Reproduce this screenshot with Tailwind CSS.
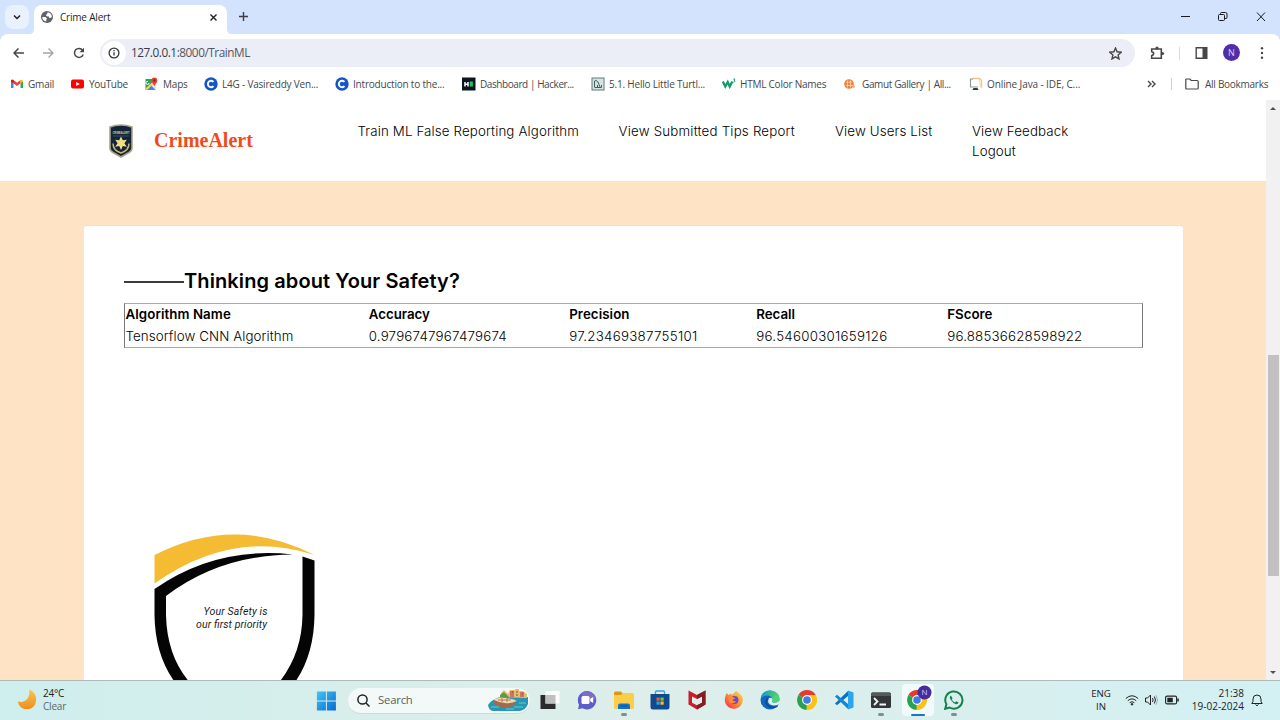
<!DOCTYPE html>
<html lang="en">
<head>
<meta charset="utf-8">
<title>Crime Alert</title>
<script src="https://cdn.jsdelivr.net/npm/@tailwindcss/browser@4"></script>
</head>
<body class="w-[1280px] h-[720px] overflow-hidden flex flex-col bg-white font-['Open_Sans','Noto_Sans',sans-serif] text-[#45474a]">

<!-- Tab strip -->
<div class="h-[34px] shrink-0 bg-[#d3e2fd] flex items-end">
  <div class="w-6 h-6 ml-[5px] mb-[5px] rounded-lg bg-[#e9f0fe] grid place-items-center">
    <svg class="w-2 h-2" viewBox="0 0 8 8" fill="none" stroke="#1f1f1f" stroke-width="1.5"><path d="M1 2.5l3 3 3-3"/></svg>
  </div>
  <svg class="w-[5px] h-[5px]" viewBox="0 0 5 5" fill="#fff"><path d="M5 0v5H0Q5 5 5 0z"/></svg>
  <div class="w-[193px] h-[29px] bg-white rounded-t-lg flex items-center pl-[7px] pb-[5px]">
    <svg class="w-3 h-3" viewBox="0 0 12 12"><circle cx="6" cy="6" r="6" fill="#5f6368"/><path d="M1.3 6h3l1.8 1.6-.8 1v2C3 10.300 1.100 8.500 1.300 6zM6.500 1.500L6 3 4.800 4.300l1.700 1.200H8L8.200 7l2-.2.7-1.400C10.700 3 8.700 1.200 6.500 1.500z" fill="#fff"/></svg>
    <span class="ml-[7px] text-[10px] tracking-[-0.200px] text-[#1f1f1f] grow">Crime Alert</span>
    <svg class="w-[7px] h-[7px] mr-[10px]" viewBox="0 0 7 7" stroke="#1f1f1f" stroke-width="1.4"><path d="M.5.5l6 6M6.500.5l-6 6"/></svg>
  </div>
  <svg class="w-[5px] h-[5px]" viewBox="0 0 5 5" fill="#fff"><path d="M0 0v5h5Q0 5 0 0z"/></svg>
  <svg class="w-[9px] h-[9px] ml-[7px] mb-[13px]" viewBox="0 0 9 9" stroke="#3c3e41" stroke-width="1.400"><path d="M4.500 0v9M0 4.500h9"/></svg>
  <div class="grow"></div>
  <svg class="w-[86px] h-[12px] mr-[13px] mb-[11px]" viewBox="0 0 86 12" fill="none" stroke="#1b1c20"><path d="M0 5.500h9"/><rect x="37.500" y="3.500" width="6" height="6" rx="1"/><path d="M39.500 3.500v-1q0-1 1-1h4q1.500 0 1.500 1.500v3.500q0 1-1 1h-1"/><path d="M76 1.500l8 8.500M84 1.500L76 10"/></svg>
</div>

<!-- Toolbar -->
<div class="h-[38px] shrink-0 bg-[#d3e2fd]">
<div class="h-full bg-white rounded-t-lg flex items-center pl-[13px]">
  <svg class="w-[11px] h-[10px]" viewBox="0 0 11 10" fill="none" stroke="#474747" stroke-width="1.500"><path d="M5.500.5L1 5l4.500 4.500M1 5h10"/></svg>
  <svg class="w-[11px] h-[10px] ml-[19px]" viewBox="0 0 11 10" fill="none" stroke="#a4a4a6" stroke-width="1.300"><path d="M5.500.5L10 5 5.500 9.500M10 5H0"/></svg>
  <svg class="w-[12px] h-[12px] ml-[19px]" viewBox="0 0 12 12"><path d="M10.200 7.500A4.500 4.500 0 1 1 9.600 3.200" fill="none" stroke="#474747" stroke-width="1.500"/><path d="M11 .8v4.500H6.500z" fill="#474747"/></svg>
  <div class="w-[1035px] h-[28px] ml-[15px] rounded-full bg-[#ebedf7] flex items-center pl-[2px]">
    <div class="w-6 h-6 rounded-full bg-white grid place-items-center">
      <svg class="w-[12px] h-[12px]" viewBox="0 0 12 12"><circle cx="6" cy="6" r="4.900" fill="none" stroke="#333538" stroke-width="1.300"/><path d="M6 5.300v3.300M6 3v1.300" stroke="#333538" stroke-width="1.300"/></svg>
    </div>
    <span class="ml-[5px] grow text-[11.800px] tracking-[-0.460px] text-[#55575c] whitespace-nowrap"><span class="text-[#3a3b3e]">127.0.0.1</span>:8000/TrainML</span>
    <svg class="w-[13px] h-[13px] mr-[13px]" viewBox="0 0 13 13" fill="none" stroke="#474747" stroke-width="1.400"><path d="M6.500 1l1.600 3.800 4.100.4-3.100 2.700.9 4-3.500-2.100L3 11.900l.9-4L.8 5.200l4.100-.4z"/></svg>
  </div>
  <svg class="w-[15px] h-[14px] ml-[15px]" viewBox="0 0 15 14"><path d="M1.700 3h9.600v9.300H1.700V9.600q2-.3 2-2t-2-2z" fill="none" stroke="#474747" stroke-width="1.600"/><circle cx="7" cy="2" r="1.600" fill="#474747"/><circle cx="12.500" cy="7.500" r="1.600" fill="#474747"/></svg>
  <div class="w-px h-[13px] ml-[14px] bg-[#c9dcfb]"></div>
  <svg class="w-[13px] h-[12px] ml-[15px]" viewBox="0 0 13 12"><path d="M1.200.7h10.600v10.600H1.200z" fill="none" stroke="#474747" stroke-width="1.400"/><path d="M7.500 1h4.500v10H7.500z" fill="#474747"/></svg>
  <div class="w-[17px] h-[17px] ml-[15px] mb-px rounded-full bg-[#512da8] text-[#dcd4f3] text-[9px] leading-[17px] text-center">N</div>
  <svg class="w-[4px] h-[12px] ml-[20px]" viewBox="0 0 4 12" fill="#474747"><circle cx="2" cy="1.300" r="1.200"/><circle cx="2" cy="6" r="1.200"/><circle cx="2" cy="10.700" r="1.200"/></svg>
</div>
</div>

<!-- Bookmarks -->
<div class="h-[28px] shrink-0 pl-[10px] pb-[4px] grid grid-cols-[61px_73px_60px_131px_127px_129px_131px_121px_126px_178px_24px_14px_84px] items-center text-[10px] tracking-[-0.200px] whitespace-nowrap">
  <div class="flex items-center gap-[4px]"><svg class="w-[14px] h-[14px]" viewBox="0 0 14 14"><path d="M1 4v7h2.500V5z" fill="#4285f4"/><path d="M10.500 5v6H13V4z" fill="#34a853"/><path d="M1 4.500V3.300Q2 2 3.500 3.100L7 5.800l3.500-2.700v3.200L7 9 1 4.500z" fill="#ea4335"/><path d="M10.500 3.100Q12.500 2 13 3.600v1l-2.500 1.900z" fill="#fbbc04"/><path d="M1 4.500V3.500q.8-1.300 2.500-.4v3.400z" fill="#c5221f"/></svg>Gmail</div>
  <div class="flex items-center gap-[5px] tracking-[-0.350px]"><svg class="w-[13px] h-[14px]" viewBox="0 0 13 14"><rect y="2.500" width="13" height="9" rx="2" fill="#f00"/><path d="M5.200 5l3.600 2-3.600 2z" fill="#fff"/></svg>YouTube</div>
  <div class="flex items-center gap-[5px]"><svg class="w-[14px] h-[14px]" viewBox="0 0 14 14"><rect x="1.500" y="2" width="10.500" height="11" rx="1" fill="#e4e7ea"/><path d="M1.500 2H8v5l-6.500 6z" fill="#2fa35a"/><path d="M2.500 13L7 8.300 11.500 13z" fill="#4285f4"/><path d="M1.500 11.500L8.500 5l1.500 1.300L3 13z" fill="#fcd25c"/><path d="M4 4.500a1.500 1.500 0 1 0 1 1.500" stroke="#fff" fill="none"/><path d="M10.300 9.500C10 7 7.500 6 7.500 3.400a2.900 2.900 0 0 1 5.800 0C13.300 6 10.700 7 10.300 9.500z" fill="#e8402f"/><circle cx="10.400" cy="3.400" r="1.100" fill="#8e1c14"/></svg>Maps</div>
  <div class="flex items-center gap-[4px]"><svg class="w-[14px] h-[14px]" viewBox="0 0 14 14"><circle cx="7" cy="7" r="6.700" fill="#1455c8"/><path d="M9.500 4.900a3.200 3.200 0 1 0 0 4.200" fill="none" stroke="#fff" stroke-width="1.900"/></svg>L4G - Vasireddy Ven...</div>
  <div class="flex items-center gap-[4px]"><svg class="w-[14px] h-[14px]" viewBox="0 0 14 14"><circle cx="7" cy="7" r="6.700" fill="#1455c8"/><path d="M9.500 4.900a3.200 3.200 0 1 0 0 4.200" fill="none" stroke="#fff" stroke-width="1.900"/></svg>Introduction to the...</div>
  <div class="flex items-center gap-[4px] tracking-[-0.430px]"><svg class="w-[14px] h-[14px]" viewBox="0 0 14 14"><path d="M0 .5h13.500v13H0z" fill="#0b1420"/><path d="M3 5v4.500M6 5v4.500M3 7.200h3" stroke="#fff" stroke-width="1.500"/><path d="M7.700 4.500h3.200v5H7.700z" fill="#21c55d"/></svg>Dashboard | Hacker...</div>
  <div class="flex items-center gap-[4px]"><svg class="w-[14px] h-[14px]" viewBox="0 0 14 14" fill="none" stroke="#335055"><rect x="1" y="1" width="12" height="12" fill="#d5e3e1" stroke="#5e7a7b"/><path d="M3.500 10V4Q5 2.500 7 5l2 5M3.500 10.500h7M6.500 8v2M10.500 8v2.500" stroke-width=".9"/></svg>5.1. Hello Little Turtl...</div>
  <div class="flex items-center gap-[4px] tracking-[-0.230px]"><svg class="w-[14px] h-[14px]" viewBox="0 0 14 14" fill="none" stroke="#149c68"><path d="M.8 4.500L3.300 9.500 5.700 5l2 4.500 2.600-5" stroke-width="2.300"/><path d="M11.300 2h1.700l-1 1.300q1.700.3.700 1.600l-1.400.2" stroke-width=".9"/></svg>HTML Color Names</div>
  <div class="flex items-center gap-[5px] tracking-[-0.370px]"><svg class="w-[14px] h-[14px]" viewBox="0 0 14 14"><circle cx="6" cy="7" r="4.800" fill="#f0813c"/><path d="M3 5h6M3 8.500h7M4.500 3.500v7M7.500 3.500v7" stroke="#ffd9b5" stroke-width=".8"/><circle cx="10.700" cy="9.500" r="1.200" fill="#f5a263"/></svg>Gamut Gallery | All...</div>
  <div class="flex items-center gap-[4px] tracking-[-0.100px]"><svg class="w-[14px] h-[14px]" viewBox="0 0 14 14" fill="none"><path d="M3 1.500h7.500l2 2v7" stroke="#f0c48a" stroke-width="1.400"/><path d="M4 2H1.500v8H9" stroke="#8e979b" stroke-width="1.200"/><path d="M10 2l2 9" stroke="#f6d7ad"/><path d="M4.500 11h4l1 2h-6z" fill="#33383c"/></svg>Online Java - IDE, C...</div>
  <svg class="w-[9px] h-[8px]" viewBox="0 0 9 8" fill="none" stroke="#474747" stroke-width="1.400"><path d="M1 1l3 3-3 3M5 1l3 3-3 3"/></svg>
  <div class="w-[1px] h-[12px] bg-[#bcd4fa]"></div>
  <div class="flex items-center gap-[6px] tracking-[-0.270px]"><svg class="w-[14px] h-[12px]" viewBox="0 0 14 12" fill="none" stroke="#474747" stroke-width="1.200"><path d="M.8 10V2q0-1 1-1h3l1.400 1.500h6q1 0 1 1V10q0 1-1 1H1.800q-1 0-1-1z"/></svg>All Bookmarks</div>
</div>

<!-- Page viewport -->
<div class="h-[580px] shrink-0 flex overflow-hidden">
  <div class="w-[1266px] flex flex-col font-[Inter,sans-serif] text-black">
    <header class="h-[81px] shrink-0 bg-white flex pl-[108px]">
      <svg class="w-[26px] h-[34px] mt-[24px]" viewBox="0 0 26 34"><path d="M13 1q6 0 11 2v21q0 3-3 4.500L13 33l-8-4.500Q2 27 2 24V3q5-2 11-2z" fill="#15243a" stroke="#a6a58c" stroke-width="1.600"/><text x="4.500" y="10" textLength="17" lengthAdjust="spacingAndGlyphs" font-family="Liberation Sans" font-weight="bold" font-size="4" fill="#d8cf8a">CRIMEALERT</text><path d="M5 12h16" stroke="#3f5573" stroke-width=".8"/><path d="M13 12.500l1.800 3.800 4-.6-2.400 3.500 2.400 3.500-4-.6L13 26l-1.800-3.900-4 .6 2.400-3.500-2.400-3.500 4 .6z" fill="#f0df83"/><path d="M5 19.500q0 7 8 9.500 8-2.500 8-9.500" fill="none" stroke="#c9bb6b" stroke-width="1.500"/></svg>
      <div class="w-[203.500px] ml-[20px] mt-[28px] font-['Liberation_Serif',serif] font-bold text-[20px] leading-[24px] text-[#ee4c1b]">CrimeAlert</div>
      <nav class="mt-[21px] flex gap-[40px] text-[13.300px] leading-5 font-light tracking-[0.140px] text-black whitespace-nowrap">
        <span class="w-[221px]">Train ML False Reporting Algorithm</span>
        <span class="w-[176.500px] tracking-[0.210px]">View Submitted Tips Report</span>
        <span class="w-[97px]">View Users List</span>
        <span>View Feedback<br>Logout</span>
      </nav>
    </header>
    <main class="h-[499px] bg-[#fee4c4] pl-[84px] pt-[44px]">
      <section class="w-[1099px] h-[455px] bg-white rounded-t-[3px] border-t border-t-[#e9dfd5] px-[40px] pt-[43px]">
        <div class="flex items-center h-[24px]">
          <div class="w-[60px] h-[2px] mt-[2px] bg-[#3c3c3c]"></div>
          <h1 class="text-[20px] font-semibold leading-6 tracking-[0.100px] whitespace-nowrap">Thinking about Your Safety?</h1>
        </div>
        <div class="w-[1019px] h-[45px] mt-[10px] border border-y-[#aaa] border-x-[#777] pl-[0.500px] text-[13.300px] grid grid-cols-[243.200px_200.500px_187px_191px_1fr] grid-rows-[21px_22px] text-black whitespace-nowrap">
          <b class="font-semibold leading-[20px] tracking-[0.080px]">Algorithm Name</b><b class="font-semibold leading-[20px]">Accuracy</b><b class="font-semibold leading-[20px] tracking-[0.080px]">Precision</b><b class="font-semibold leading-[20px]">Recall</b><b class="font-semibold leading-[20px]">FScore</b>
          <span class="font-light leading-[22px] tracking-[0.100px]">Tensorflow CNN Algorithm</span><span class="font-light leading-[22px] tracking-[0.220px]">0.9796747967479674</span><span class="font-light leading-[22px] tracking-[0.280px]">97.23469387755101</span><span class="font-light leading-[22px] tracking-[0.280px]">96.54600301659126</span><span class="font-light leading-[22px] tracking-[0.200px]">96.88536628598922</span>
        </div>
        <svg class="w-[190px] h-[165px] mt-[172px] ml-[16px]" viewBox="0 0 190 165">
          <path d="M14.500 35Q95-6 174.500 35Q93 8 14.500 63.500z" fill="#f4bb33"/>
          <path d="M14.500 69Q76 26 153 34.500Q80 35 26 76V95Q27 138 52 165H37Q15 137 14.500 95z" fill="#050505"/>
          <path d="M162.500 36.500l12 4V95Q174 137 153 165H137Q162 135 162.500 95z" fill="#050505"/>
          <g font-family="Roboto,sans-serif" font-style="italic" font-size="10.500" fill="#1d1d1d"><text x="63.500" y="95" textLength="64">Your Safety is</text><text x="56" y="108" textLength="71">our first priority</text></g>
        </svg>
      </section>
    </main>
  </div>
  <div class="w-[14px] bg-[#f1f1f1] flex flex-col items-center pt-[7px]">
    <svg class="w-[6px] h-[3px]" viewBox="0 0 6 3" fill="#505050"><path d="M0 3l3-3 3 3z"/></svg>
    <div class="w-[11px] h-[221px] mt-[245px] bg-[#c1c1c1]"></div>
    <svg class="w-[6px] h-[3px] mt-[95px]" viewBox="0 0 6 3" fill="#505050"><path d="M0 0l3 3 3-3z"/></svg>
  </div>
</div>

<!-- Taskbar -->
<div class="h-[40px] shrink-0 border-t border-[#aebbb8] bg-linear-to-r from-[#cfeeee] via-[#deeeea] to-[#d3f0f3] flex items-center text-[#222]">
  <svg class="w-[20px] h-[20px] ml-[17px] mb-[3px]" viewBox="0 0 20 20"><defs><linearGradient id="moon" x1="0" y1="0" x2="0" y2="1"><stop stop-color="#f8c650"/><stop offset="1" stop-color="#ef8c1c"/></linearGradient></defs><path d="M12 .5Q19 3 19 10A9 9 0 0 1 .8 12.500Q7 14 10.500 9.500 13.300 5.500 12 .5z" fill="url(#moon)"/></svg>
  <div class="ml-[6px] mb-[2px] w-[273px] text-[10px] leading-[13px] tracking-[-0.200px]">24°C<br><span class="text-[#5d6768]">Clear</span></div>
  <svg class="w-[20px] h-[20px]" viewBox="0 0 20 20"><defs><linearGradient id="win" x1="0" y1="0" x2="1" y2="1"><stop stop-color="#45c4f7"/><stop offset="1" stop-color="#0669cf"/></linearGradient></defs><path d="M.9.5h9v9h-9zM10.900.5h9v9h-9zM.9 10.500h9v9h-9zM10.900 10.500h9v9h-9z" fill="url(#win)"/></svg>
  <div class="w-[182px] h-[26px] ml-[12px] rounded-full bg-[#f3f9f8] border-b border-[#cbdcd8] flex items-center overflow-hidden pl-[9px]">
    <svg class="w-[13px] h-[13px]" viewBox="0 0 13 13" fill="none" stroke="#222" stroke-width="1.500"><circle cx="5.500" cy="5.500" r="4.600"/><path d="M9 9l3.500 3.500"/></svg>
    <span class="ml-[8px] mt-px grow text-[11.300px] tracking-[-0.200px] text-[#595d5e]">Search</span>
    <svg class="w-[43px] h-[24px] mr-px" viewBox="0 0 43 24"><path d="M2 17Q8 9 17 9h25v7q-3 7-9 7H8q-5 0-6-6z" fill="#2796b4"/><path d="M15 9V5l3-3 4 4 2-4h5V1h4v2h4l4 3v4z" fill="#e7bd72"/><path d="M24 3h4v6h-4zM34 4h4v5h-4z" fill="#d9705a"/><path d="M14 7l4-3 5 5H14z" fill="#5f9a4a"/><path d="M26 4h1M30 4h2M30 7h2M36 6h1" stroke="#7a493b"/><path d="M7 12q10 4 24 1-3 6-9 6H15Q8 18 7 12z" fill="#a36a4c"/><path d="M7 11.500q10-4 24 1.500-12 5-24-1.500z" fill="#f3d9b0"/><path d="M12 12h13M16 10v4M21 10v4" stroke="#9c5d3e" stroke-width=".7"/><path d="M28 19h9M20 21h8M33 15h7M5 19h8" stroke="#70c8d5"/></svg>
  </div>
  <div class="w-[440px] ml-[2px] h-full pb-px grid grid-cols-12 place-items-center">
    <svg class="w-[20px] h-[20px]" viewBox="0 0 20 20"><path d="M.5 5h15v14H.5z" fill="#292b2c"/><path d="M5.500 1h14v12.500h-14z" fill="#fcfcfc"/><path d="M5.500 5h10v8.500h-10z" fill="#bfc1c1"/></svg>
    <svg class="w-[20px] h-[20px]" viewBox="0 0 20 20"><path d="M10 1a9.200 9.200 0 1 1-4.500 17.200L1 19.200l1-4.500A9.200 9.200 0 0 1 10 1z" fill="#5b5fc7"/><path d="M4 3.500A9.200 9.200 0 0 1 19 9L10 10z" fill="#7c6fc7"/><rect x="4.500" y="6" width="8" height="8" rx="1.500" fill="#fff"/><path d="M13.200 8.700l3-1.700v6l-3-1.700z" fill="#fff"/></svg>
    <div class="relative"><svg class="w-[20px] h-[20px]" viewBox="0 0 20 20"><path d="M0 3q0-1.500 1.500-1.500h5L8.500 3v3H0z" fill="#d89a13"/><path d="M0 5h7l2-2h9.500Q20 3 20 4.500v13q0 1.500-1.500 1.500h-17Q0 19 0 17.500z" fill="#fbce4a"/><path d="M4 19v-3.500q0-2 2-2h8q2 0 2 2V19z" fill="#1372cd"/><path d="M6.500 16h7" stroke="#0b529c"/></svg><div class="absolute left-[7px] top-[23px] w-[6px] h-[3px] rounded bg-[#858c8c]"></div></div>
    <svg class="w-[20px] h-[20px]" viewBox="0 0 20 20"><path d="M5.500 4V2q0-1 1-1h7q1 0 1 1v2" fill="none" stroke="#2fa3db" stroke-width="1.300"/><path d="M.5 4h19v13q0 2.500-2.500 2.500H3Q.5 19.500.5 17z" fill="#12488c"/><path d="M6.500 7.500h3.200v3.200H6.500z" fill="#f15a38"/><path d="M10.500 7.500h3.200v3.200h-3.200z" fill="#86bd38"/><path d="M6.500 11.500h3.200v3.200H6.500z" fill="#24a7df"/><path d="M10.500 11.500h3.200v3.200h-3.200z" fill="#fbbd29"/></svg>
    <svg class="w-[20px] h-[20px]" viewBox="0 0 20 20"><path d="M1.500.5L10 5l8.500-4.500v14L10 19.500l-8.500-5zM5 6.500v6.300l5 2.500 5-2.500V6.500L10 9z" fill="#c61f2a" fill-rule="evenodd"/><path d="M10 5L18.500.5v14L10 19.500v-4.200l5-2.500V6.500L10 9z" fill="#861d22"/></svg>
    <svg class="w-[20px] h-[20px]" viewBox="0 0 20 20"><defs><linearGradient id="fox" x1="1" y1="0" x2="0" y2="1"><stop stop-color="#ffdf3b"/><stop offset=".45" stop-color="#ff9831"/><stop offset="1" stop-color="#ed245a"/></linearGradient></defs><path d="M3 3l1.500 2L7 3.500 8 5l4-4q5 3 6.500 6.500A9 9 0 1 1 1 8Q1 5 3 3z" fill="url(#fox)"/><circle cx="10.500" cy="10" r="4" fill="#7646c8"/><path d="M4.500 7q3-1.500 5 .5l2 .5-3 2q1 2 4 1-3 4-7 1-2-2-1-5z" fill="#ff8d2e"/></svg>
    <svg class="w-[20px] h-[20px]" viewBox="0 0 20 20"><defs><linearGradient id="edge" x1="0" y1="0" x2="1" y2="0"><stop stop-color="#1597cf"/><stop offset="1" stop-color="#5cd65d"/></linearGradient></defs><circle cx="10" cy="10" r="9.500" fill="#1266bd"/><path d="M.5 9Q2 .5 10 .5c6 0 9.500 4 9.500 7.500 0 4-3.500 5-6.500 4.500-2-.5-1-1.500-.5-3Q12 6 8 5.500 3 5.300.5 9z" fill="url(#edge)"/><path d="M7.500 8Q4 13 9 16.500q4 2 8.500-.5" fill="none" stroke="#0c4b96" stroke-width="1.500"/><path d="M9 8q-3 6 4 7.500 3 .5 6-1.500l1-4q-3 3.500-7 2.500-2-1 0-3Q12 7 9 8z" fill="#d9eeee"/><path d="M12.200 9.500Q13 5 18 5q1.500 2 1.500 4-1 4-6 3.500-2-.5-1.300-3z" fill="#4fd17a"/></svg>
    <svg class="w-[20px] h-[20px]" viewBox="0 0 20 20"><path d="M10 10L1.400 5A10 10 0 0 1 18.700 5z" fill="#e33b2e"/><path d="M10 10L1.400 5A10 10 0 0 0 9.500 20l4.500-8z" fill="#2aa14e"/><path d="M10 5h8.700A10 10 0 0 1 9.500 20z" fill="#fbc116"/><circle cx="10" cy="10" r="4.900" fill="#fff"/><circle cx="10" cy="10" r="3.800" fill="#3d7de8"/></svg>
    <svg class="w-[20px] h-[20px]" viewBox="0 0 20 20"><path d="M14 1v5L3 15.300 1 13.500z" fill="#0f72bc"/><path d="M14 19v-5L3 4.700 1 6.500z" fill="#1686d2"/><path d="M14 .5l5.500 2v15l-5.500 2z" fill="#29a6ee"/></svg>
    <div class="relative ml-[2px]"><svg class="w-[20px] h-[20px]" viewBox="0 0 20 20"><rect y="2.500" width="20" height="15.500" rx="1.500" fill="#323639"/><path d="M0 6V4q0-1.500 1.500-1.500h17Q20 2.500 20 4v2z" fill="#54595c"/><path d="M3 8l3.500 3.500L3 15M8.500 14.500H15" fill="none" stroke="#f5f5f5" stroke-width="1.800"/></svg><div class="absolute left-[7px] top-[23px] w-[6px] h-[3px] rounded bg-[#858c8c]"></div></div>
    <div class="relative w-[32px] h-[32px] ml-[2px] rounded bg-[#f2fbfc] grid place-items-center">
      <svg class="w-[30px] h-[30px]" viewBox="0 0 30 30"><g transform="translate(4 5)"><path d="M10 10L1.400 5A10 10 0 0 1 18.700 5z" fill="#e33b2e"/><path d="M10 10L1.400 5A10 10 0 0 0 9.500 20l4.500-8z" fill="#2aa14e"/><path d="M10 5h8.700A10 10 0 0 1 9.500 20z" fill="#fbc116"/><circle cx="10" cy="10" r="4.900" fill="#fff"/><circle cx="10" cy="10" r="3.800" fill="#3d7de8"/></g><circle cx="21.500" cy="7.500" r="7" fill="#4a2b9d"/><text x="21.500" y="10.400" text-anchor="middle" font-family="Open Sans" font-size="8" fill="#d5cdf0">N</text></svg>
      <div class="absolute left-[9px] bottom-0 w-[14px] h-[2px] rounded bg-[#1678c8]"></div>
    </div>
    <div class="relative"><svg class="w-[20px] h-[20px]" viewBox="0 0 20 20" fill="none" stroke="#17804e"><path d="M1.200 18.800l1.200-4.500a8.600 8.600 0 1 1 3.200 3.200z" stroke-width="2"/><path d="M6.800 5.500Q5 7 6.500 9.500q2.500 4 5.500 4.800 2 .2 2.700-1.700l-2.500-1.300-1.200 1.200Q8.500 11.500 7.700 9.300l.9-1.100z" fill="#17804e" stroke="none"/></svg><div class="absolute left-[7px] top-[23px] w-[6px] h-[3px] rounded bg-[#858c8c]"></div></div>
  </div>
  <div class="grow"></div>
  <div class="w-[24px] mb-px text-center text-[9.700px] leading-[13px] tracking-[-0.100px]">ENG<br>IN</div>
  <svg class="w-[14px] h-[12px] ml-[12px] mb-[2px]" viewBox="0 0 14 12" fill="none" stroke="#222"><path d="M.8 4.500Q7-1 13.200 4.500M2.800 6.700Q7 3 11.200 6.700M4.700 8.700Q7 6.700 9.300 8.700"/><circle cx="7" cy="10.300" r=".8" fill="#222"/></svg>
  <svg class="w-[13px] h-[12px] ml-[6px] mb-[2px]" viewBox="0 0 13 12" fill="none" stroke="#222"><path d="M.5 4h2l3-3v10l-3-3h-2z"/><path d="M7.500 4q1.300 2 0 4M9.300 2.500q2.400 3.500 0 7"/><path d="M11 1.200q3 4.800 0 9.600" stroke="#9bb1b3"/></svg>
  <svg class="w-[14px] h-[10px] ml-[7px] mr-px mb-[2px]" viewBox="0 0 14 10"><rect x=".6" y="1.100" width="11" height="7.800" rx="1.500" fill="none" stroke="#222" stroke-width="1.100"/><path d="M2.300 2.800h5.500v4.400H2.300zM12.300 3.500h1.500v3h-1.500z" fill="#222"/></svg>
  <div class="w-[64px] mb-[2px] text-right text-[10px] leading-[13px] whitespace-nowrap">21:38<br>19-02-2024</div>
  <svg class="w-[12px] h-[13px] ml-[7px] mb-px mr-[17px]" viewBox="0 0 12 13" fill="none" stroke="#222"><path d="M.8 9.500L2 7.500V5a4 4 0 0 1 8 0v2.500l1.200 2zM4.500 10.500q1.500 2.500 3 0"/></svg>
</div>
</body>
</html>
